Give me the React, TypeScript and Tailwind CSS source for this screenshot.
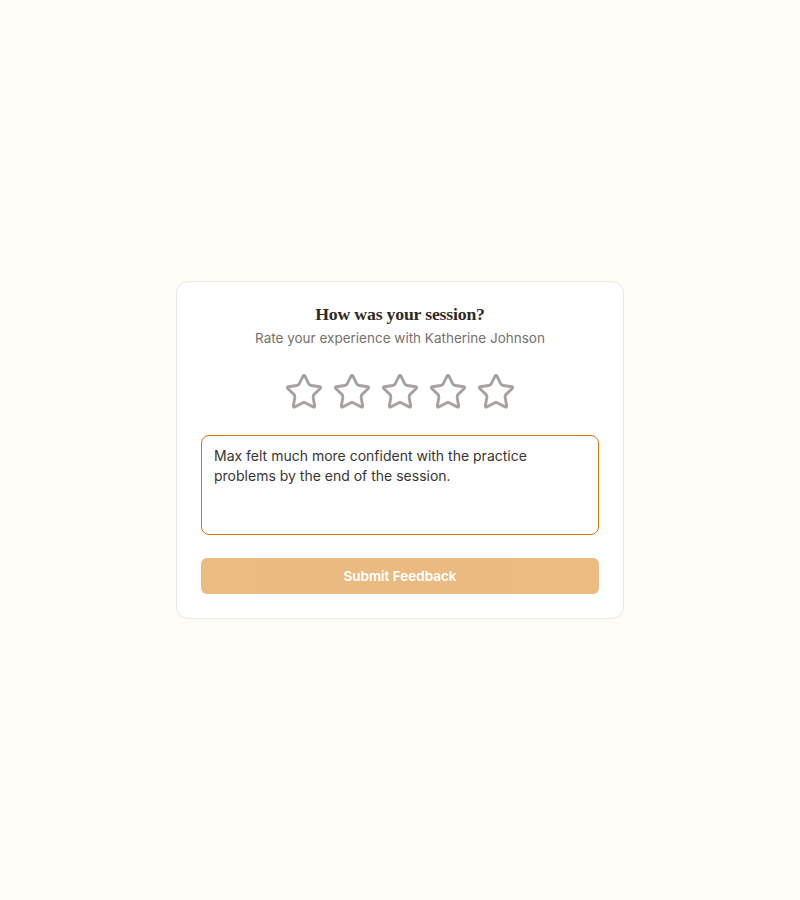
import { useState } from 'react';
import { Star } from 'lucide-react';

function App() {
  const [rating, setRating] = useState(0);
  const [feedback, setFeedback] = useState(
    'Max felt much more confident with the practice problems by the end of the session.'
  );

  return (
    <div className="min-h-screen flex items-center justify-center bg-[#fffcf7] font-['Inter','Noto_Sans',sans-serif]">
      <div className="w-[448px] bg-white border border-[#ede8e1] rounded-xl px-6 pt-5 pb-6">
        <div className="text-center">
          <h2 className="text-[17.75px] leading-6 font-bold text-[#2e2a25] font-['Liberation_Serif','DejaVu_Serif',serif] tracking-[-0.2px]">
            How was your session?
          </h2>
          <p className="mt-0.5 text-[13.5px] leading-5 text-[#78716c]">
            Rate your experience with Katherine Johnson
          </p>
        </div>

        {/* stars */}
        <div className="flex justify-center gap-2 mt-6">
          {[1, 2, 3, 4, 5].map(n => (
            <button key={n} type="button" onClick={() => setRating(n)} className="p-0">
              <Star
                size={40}
                strokeWidth={1.75}
                className={n <= rating ? 'text-amber-500 fill-amber-500' : 'text-[#a8a29e]'}
              />
            </button>
          ))}
        </div>

        <textarea
          value={feedback}
          onChange={e => setFeedback(e.target.value)}
          className="mt-[23px] block w-full h-[100px] resize-none rounded-lg border border-[#d97706] px-3 py-2.5 text-sm leading-5 text-[#3a3631] outline-none"
        />

        <button
          type="button"
          disabled={rating === 0}
          className="mt-[23px] w-full h-9 rounded-md bg-[#d97706] disabled:opacity-50 text-white text-[13.5px] font-semibold"
        >
          Submit Feedback
        </button>
      </div>
    </div>
  );
}

export default App;
